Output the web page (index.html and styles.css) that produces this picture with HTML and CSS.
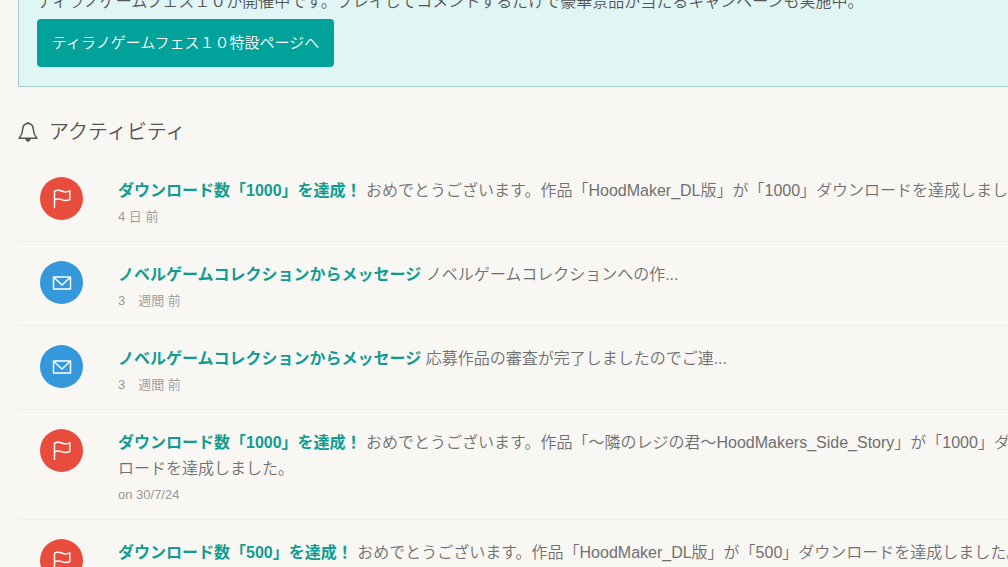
FILE: index.html
```html
<!DOCTYPE html>
<html lang="ja">
<head>
<meta charset="utf-8">
<title>アクティビティ</title>
<link rel="stylesheet" href="styles.css">
</head>
<body>
<svg class="sprite" aria-hidden="true">
  <symbol id="flag" viewBox="0 0 20 20"><path d="M2.500 18.600V2.400C5 .4 8.500 1.500 10.500 2.300s4.500 1 7.300-.4v8.600c-2.800 1.300-5.200 1.200-7.300.4s-5.500-1.500-8 .2"/></symbol>
  <symbol id="mail" viewBox="0 0 20 20"><path d="M1.500 4h17v12h-17zM2 4.500l8 7.500 8-7.500"/></symbol>
</svg>
<main class="page">
  <section class="notice">
    <p class="notice-text">ティラノゲームフェス１０が開催中です。プレイしてコメントするだけで豪華景品が当たるキャンペーンも実施中。</p>
    <a class="button" href="#fes">ティラノゲームフェス１０特設ページへ</a>
  </section>
  <h2 class="heading">
    <svg class="bell" viewBox="0 0 20 20" aria-hidden="true"><path class="bell-line" d="M10 1.500C6.300 1.500 4.700 4.300 4.600 8c-.1 3.500-1.300 5.700-3.500 8.200h17.800c-2.200-2.500-3.400-4.700-3.500-8.200-.1-3.700-1.700-6.500-5.400-6.500z"/><path class="bell-fill" d="M8.500 1.500a1.500 1.500 0 0 1 3 0zM7.300 16.500h5.400c0 1.900-1.200 3.200-2.700 3.200s-2.700-1.300-2.700-3.200z"/></svg>
    アクティビティ
  </h2>
  <ul class="feed">
    <li class="item">
      <span class="badge badge-flag"><svg class="icon"><use href="#flag"/></svg></span>
      <div class="body">
        <p class="text"><a class="title" href="#a1">ダウンロード数「1000」を達成！</a> おめでとうございます。作品「HoodMaker_DL版」が「1000」ダウンロードを達成しました。</p>
        <p class="date">4 日 前</p>
      </div>
    </li>
    <li class="item">
      <span class="badge badge-mail"><svg class="icon"><use href="#mail"/></svg></span>
      <div class="body">
        <p class="text"><a class="title" href="#a2">ノベルゲームコレクションからメッセージ</a> ノベルゲームコレクションへの作...</p>
        <p class="date">3　週間 前</p>
      </div>
    </li>
    <li class="item">
      <span class="badge badge-mail"><svg class="icon"><use href="#mail"/></svg></span>
      <div class="body">
        <p class="text"><a class="title" href="#a3">ノベルゲームコレクションからメッセージ</a> 応募作品の審査が完了しましたのでご連...</p>
        <p class="date">3　週間 前</p>
      </div>
    </li>
    <li class="item">
      <span class="badge badge-flag"><svg class="icon"><use href="#flag"/></svg></span>
      <div class="body">
        <p class="text"><a class="title" href="#a4">ダウンロード数「1000」を達成！</a> おめでとうございます。作品「～隣のレジの君～HoodMakers_Side_Story」が「1000」ダウンロードを達成しました。</p>
        <p class="date">on 30/7/24</p>
      </div>
    </li>
    <li class="item">
      <span class="badge badge-flag"><svg class="icon"><use href="#flag"/></svg></span>
      <div class="body">
        <p class="text"><a class="title" href="#a5">ダウンロード数「500」を達成！</a> おめでとうございます。作品「HoodMaker_DL版」が「500」ダウンロードを達成しました。</p>
      </div>
    </li>
  </ul>
</main>
</body>
</html>
```
FILE: styles.css
```css
* { box-sizing: border-box; }
html { overflow: hidden; }
body {
  margin: 0;
  height: 100vh;
  overflow: hidden;
  background: #f8f7f3;
  color: #707070;
  font: 350 16px/26px "Liberation Sans", "Noto Sans CJK JP", sans-serif;
}
p, h2, ul { margin: 0; padding: 0; }
.sprite { display: none; }
/* the column runs past the right edge of the viewport */
.page { margin: -31px -40px 0 18px; }
.notice {
  padding: 19px 18px;
  border: 1px solid #a5cfcb;
  background: #e0f6f4;
}
.notice-text { margin-bottom: 4px; color: #555; }
.button {
  display: block;
  width: fit-content;
  padding: 11px 15px;
  border-radius: 4px;
  background: #00a299;
  color: #fff;
  font-size: 15px;
  text-decoration: none;
}
.heading {
  display: flex;
  align-items: center;
  gap: 11px;
  margin: 31px 0 12px;
  color: #555;
  font-size: 20px;
  font-weight: 350;
  line-height: 28px;
}
.bell { width: 20px; height: 20px; }
.bell-line { fill: none; stroke: #555; stroke-width: 1.5; stroke-linejoin: round; }
.bell-fill { fill: #555; }
.feed { list-style: none; }
.item {
  display: flex;
  align-items: flex-start;
  gap: 35px;
  padding: 19px 0 11px 22px;
  border-bottom: 1px solid #eeede9;
}
.badge {
  display: flex;
  flex: none;
  align-items: center;
  justify-content: center;
  width: 43px;
  height: 43px;
  border-radius: 50%;
}
.badge-flag { background: #e74c3c; }
.badge-mail { background: #3498db; }
.icon {
  width: 20px;
  height: 20px;
  fill: none;
  stroke: #fff;
  stroke-width: 1.5;
  stroke-linejoin: round;
  stroke-linecap: round;
}
.body { flex: 1; min-width: 0; padding-top: 1px; }
.title { color: #129c91; font-weight: 700; text-decoration: none; }
.date { color: #999; font-size: 13px; }
```
